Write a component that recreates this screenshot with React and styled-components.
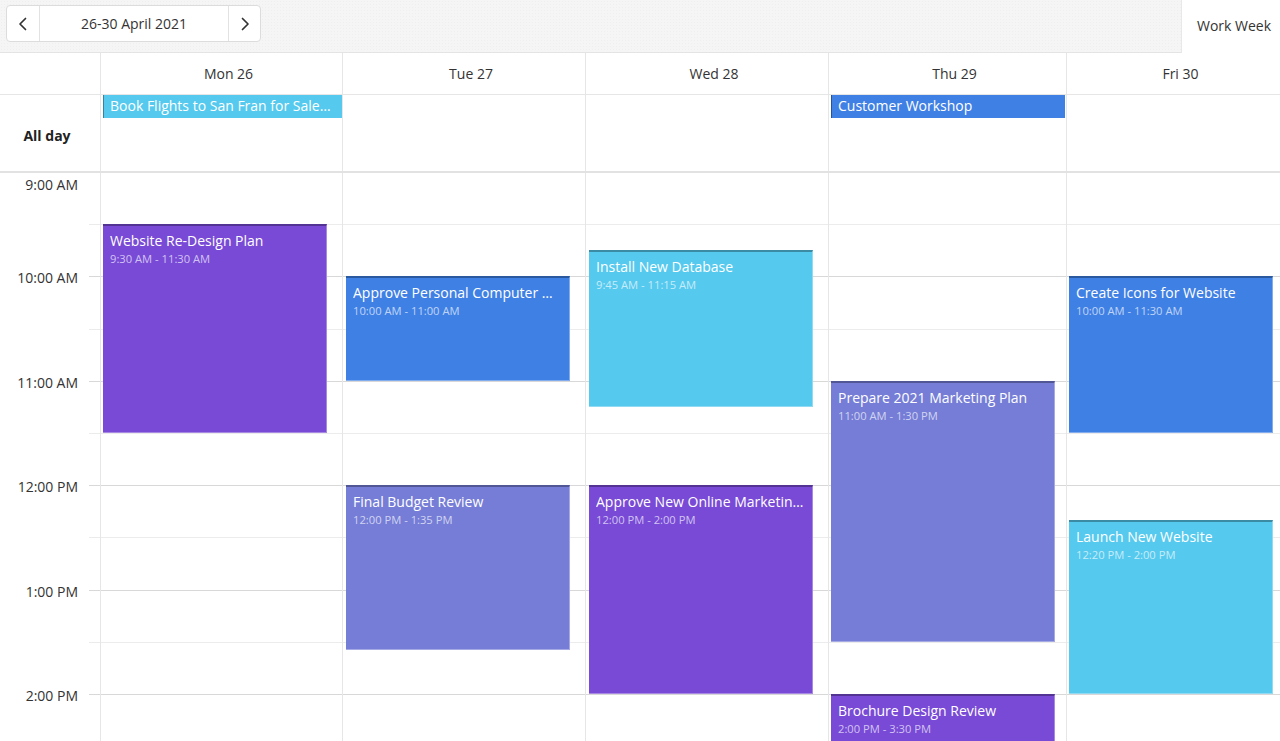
import React from "react";
import styled, { createGlobalStyle } from "styled-components";

const H = 104.4;
const START = 9;

const Global = createGlobalStyle`
  html, body { margin: 0; padding: 0; overflow: hidden; background: #fff; }
  * { box-sizing: border-box; }
  body { font-family: "Open Sans", "Noto Sans", sans-serif; color: #333; }
`;

const Page = styled.div`
  width: 1280px;
  height: 741px;
  display: flex;
  flex-direction: column;
  overflow: hidden;
`;

const Toolbar = styled.div`
  height: 53px;
  flex: none;
  display: flex;
  align-items: stretch;
  justify-content: space-between;
  background-color: #f5f5f5;
  background-image: radial-gradient(rgba(0, 0, 0, 0.025) 1px, transparent 1px);
  background-size: 3px 3px;
  border-bottom: 1px solid #e4e4e4;
`;

const NavGroup = styled.div`
  margin: 5px 0 0 6px;
  height: 37px;
  display: flex;
  background: #fff;
  border: 1px solid #dcdcdc;
  border-radius: 4px;
`;

const NavButton = styled.button`
  width: 32px;
  border: none;
  background: transparent;
  display: flex;
  align-items: center;
  justify-content: center;
  padding: 0;
  color: #333;
  border-left: ${(p) => (p.$divided ? "1px solid #e2e2e2" : "none")};
`;

const DateLabel = styled.div`
  width: 189px;
  border-left: 1px solid #e2e2e2;
  display: flex;
  align-items: center;
  justify-content: center;
  font-size: 14px;
  color: #333;
`;

const ViewButton = styled.div`
  width: 99px;
  margin-bottom: -1px;
  background: #fff;
  border-left: 1px solid #e8e8e8;
  display: flex;
  align-items: center;
  justify-content: center;
  font-size: 14px;
  color: #333;
  padding: 0 0 3px 6px;
`;

const COLS = "100px 242px 243px 243px 238px 1fr";

const HeaderRow = styled.div`
  flex: none;
  height: 42px;
  display: grid;
  grid-template-columns: ${COLS};
  border-bottom: 1px solid #e6e6e6;
`;

const HeaderCell = styled.div`
  border-left: ${(p) => (p.$first ? "none" : "1px solid #e6e6e6")};
  display: flex;
  align-items: center;
  justify-content: center;
  padding-left: 14px;
  font-size: 14px;
  color: #333;
`;

const AllDayRow = styled.div`
  flex: none;
  height: 78px;
  display: grid;
  grid-template-columns: ${COLS};
  border-bottom: 2px solid #e2e2e2;
`;

const AllDayLabel = styled.div`
  display: flex;
  align-items: center;
  justify-content: center;
  padding: 4px 6px 0 0;
  font-weight: 700;
  font-size: 14px;
  color: #222;
`;

const AllDayCell = styled.div`
  border-left: 1px solid #e6e6e6;
  padding: 0 ${(p) => p.$right || 0}px 0 2px;
`;

const AllDayEvent = styled.div`
  height: 23px;
  background: ${(p) => p.$color};
  border-left: 1px solid rgba(0, 0, 0, 0.35);
  color: #fff;
  font-size: 14px;
  line-height: 21px;
  padding: 0 6px;
  white-space: nowrap;
  overflow: hidden;
  text-overflow: ellipsis;
`;

const Body = styled.div`
  flex: 1;
  display: grid;
  grid-template-columns: ${COLS};
  overflow: hidden;
  align-items: start;
`;

const TimeColumn = styled.div`
  display: flex;
  flex-direction: column;
`;

const TimeSlot = styled.div`
  height: ${H / 2}px;
  position: relative;
  display: flex;
  justify-content: flex-end;
  align-items: flex-start;
  padding-right: 22px;
  &::after {
    content: "";
    position: absolute;
    right: 0;
    bottom: 0;
    width: 11px;
    height: 1px;
    background: ${(p) => (p.$hourEnd ? "#d8d8d8" : "#ebebeb")};
  }
`;

const TimeLabel = styled.span`
  font-size: 14px;
  color: #333;
  line-height: 19px;
  transform: translateY(${(p) => (p.$first ? "2px" : "-50%")});
  white-space: nowrap;
`;

const DayColumn = styled.div`
  position: relative;
  border-left: 1px solid #e6e6e6;
  display: flex;
  flex-direction: column;
`;

const Slot = styled.div`
  height: ${H / 2}px;
  border-bottom: 1px solid ${(p) => (p.$hourEnd ? "#d8d8d8" : "#ececec")};
`;

const Event = styled.div`
  position: absolute;
  left: ${(p) => p.$left}px;
  right: ${(p) => p.$right}px;
  background: ${(p) => p.$color};
  border-top: 2px solid rgba(0, 0, 0, 0.3);
  border-right: 1px solid rgba(255, 255, 255, 0.35);
  border-bottom: 1px solid rgba(255, 255, 255, 0.35);
  color: #fff;
  padding: 5px 7px;
  overflow: hidden;
`;

const EventTitle = styled.div`
  font-size: 14px;
  line-height: 20px;
  white-space: nowrap;
  overflow: hidden;
  text-overflow: ellipsis;
`;

const EventTime = styled.div`
  font-size: 11.2px;
  line-height: 16px;
  color: rgba(255, 255, 255, 0.68);
  white-space: nowrap;
`;

const PURPLE = "#784ad6";
const BLUE = "#3f80e5";
const SKY = "#55c9ee";
const PERI = "#757dd6";

const days = [
  { label: "Mon 26", left: 2, right: 15, allDay: { title: "Book Flights to San Fran for Sales Trip", color: SKY }, events: [
    { title: "Website Re-Design Plan", time: "9:30 AM - 11:30 AM", s: 9.5, e: 11.5, color: PURPLE },
  ] },
  { label: "Tue 27", left: 3, right: 15, events: [
    { title: "Approve Personal Computer Upgrade Plan", time: "10:00 AM - 11:00 AM", s: 10, e: 11, color: BLUE },
    { title: "Final Budget Review", time: "12:00 PM - 1:35 PM", s: 12, e: 13 + 35 / 60, color: PERI },
  ] },
  { label: "Wed 28", left: 3, right: 15, events: [
    { title: "Install New Database", time: "9:45 AM - 11:15 AM", s: 9.75, e: 11.25, color: SKY },
    { title: "Approve New Online Marketing Strategy", time: "12:00 PM - 2:00 PM", s: 12, e: 14, color: PURPLE },
  ] },
  { label: "Thu 29", left: 2, right: 11, allDay: { title: "Customer Workshop", color: BLUE }, allDayRight: 1, events: [
    { title: "Prepare 2021 Marketing Plan", time: "11:00 AM - 1:30 PM", s: 11, e: 13.5, color: PERI },
    { title: "Brochure Design Review", time: "2:00 PM - 3:30 PM", s: 14, e: 15.5, color: PURPLE },
  ] },
  { label: "Fri 30", left: 2, right: 7, events: [
    { title: "Create Icons for Website", time: "10:00 AM - 11:30 AM", s: 10, e: 11.5, color: BLUE },
    { title: "Launch New Website", time: "12:20 PM - 2:00 PM", s: 12 + 20 / 60, e: 14, color: SKY },
  ] },
];

const HOURS = [9, 10, 11, 12, 13, 14, 15, 16];
const fmt = (h) => `${h > 12 ? h - 12 : h}:00 ${h >= 12 ? "PM" : "AM"}`;

const Chevron = ({ dir }) => (
  <svg width="16" height="16" viewBox="0 0 16 16" fill="none">
    <path
      d={dir === "left" ? "M10.5 2.5 L5 8 L10.5 13.5" : "M5.5 2.5 L11 8 L5.5 13.5"}
      stroke="#333"
      strokeWidth="1.7"
      strokeLinecap="round"
      strokeLinejoin="round"
    />
  </svg>
);

export default function App() {
  return (
    <>
      <Global />
      <Page>
        <Toolbar>
          <NavGroup>
            <NavButton aria-label="Previous"><Chevron dir="left" /></NavButton>
            <DateLabel>26-30 April 2021</DateLabel>
            <NavButton $divided aria-label="Next"><Chevron dir="right" /></NavButton>
          </NavGroup>
          <ViewButton>Work Week</ViewButton>
        </Toolbar>

        <HeaderRow>
          <HeaderCell $first />
          {days.map((d) => (
            <HeaderCell key={d.label}>{d.label}</HeaderCell>
          ))}
        </HeaderRow>

        <AllDayRow>
          <AllDayLabel>All day</AllDayLabel>
          {days.map((d) => (
            <AllDayCell key={d.label} $right={d.allDayRight}>
              {d.allDay && <AllDayEvent $color={d.allDay.color}>{d.allDay.title}</AllDayEvent>}
            </AllDayCell>
          ))}
        </AllDayRow>

        <Body>
          <TimeColumn>
            {HOURS.map((h, i) => (
              <React.Fragment key={h}>
                <TimeSlot>
                  <TimeLabel $first={i === 0}>{fmt(h)}</TimeLabel>
                </TimeSlot>
                <TimeSlot $hourEnd />
              </React.Fragment>
            ))}
          </TimeColumn>
          {days.map((d) => (
            <DayColumn key={d.label}>
              {HOURS.map((h) => (
                <React.Fragment key={h}>
                  <Slot />
                  <Slot $hourEnd />
                </React.Fragment>
              ))}
              {d.events.map((ev) => (
                <Event
                  key={ev.title}
                  $color={ev.color}
                  $left={d.left}
                  $right={d.right}
                  style={{ top: (ev.s - START) * H - 1, height: (ev.e - ev.s) * H }}
                >
                  <EventTitle>{ev.title}</EventTitle>
                  <EventTime>{ev.time}</EventTime>
                </Event>
              ))}
            </DayColumn>
          ))}
        </Body>
      </Page>
    </>
  );
}
